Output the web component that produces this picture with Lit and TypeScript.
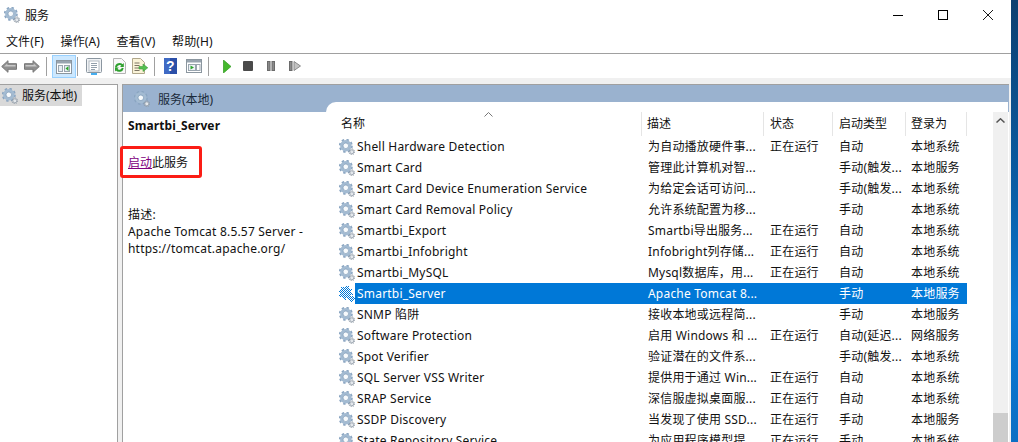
import { LitElement, html, css, svg } from "lit";
import { customElement } from "lit/decorators.js";

const gearShape = svg`<circle cx="6.800" cy="6.800" r="6" fill="none" stroke="#8aa5c1" stroke-width="2" stroke-dasharray="2.400 2.300"/>
  <circle cx="6.800" cy="6.800" r="4.300" fill="none" stroke="#a3bbd2" stroke-width="2.800"/>
  <circle cx="6.800" cy="6.800" r="2.800" fill="#f7fafc" stroke="#7795b3" stroke-width=".7"/>
  <circle cx="12.800" cy="12.800" r="2.900" fill="none" stroke="#8f9aa5" stroke-width="1" stroke-dasharray="1.200 1"/>
  <circle cx="12.800" cy="12.800" r="2" fill="#e4e8ec" stroke="#98a3ae" stroke-width=".9"/>`;

const gearSel = svg`<g shape-rendering="crispEdges">
    <circle cx="6.800" cy="6.800" r="6" fill="none" stroke="#0078d7" stroke-width="2" stroke-dasharray="2.400 2.300"/>
    <circle cx="6.800" cy="6.800" r="5.600" fill="#0078d7"/>
    <circle cx="12.800" cy="12.800" r="3" fill="#0078d7"/>
    <g fill="#fff">
      ${Array.from({ length: 64 }, (_, i) => {
        const x = (i % 8) * 2, y = Math.floor(i / 8) * 2;
        return svg`<rect x=${x} y=${y} width="1" height="1"/><rect x=${x + 1} y=${y + 1} width="1" height="1"/>`;
      })}
    </g>
  </g>`;

const gear = (sel = false) => html`<svg class="gear" width="16" height="16" viewBox="0 0 16 16">
  ${sel ? gearSel : gearShape}
</svg>`;

const arrow = (dir: number) => html`<svg width="16" height="13" viewBox="0 0 16 13">
  <path transform=${dir < 0 ? "" : "translate(16 0) scale(-1 1)"} d="M.7 6.500 7 .7V3.700H15.500V9.300H7V12.300Z" fill="#8f8f8f" stroke="#777"/>
  <path transform=${dir < 0 ? "" : "translate(16 0) scale(-1 1)"} d="M3 6.500 6.300 3.600V5H14.500V6.500Z" fill="#c8c8c8"/>
</svg>`;

const win = (inner: unknown) => html`<svg width="16" height="16" viewBox="0 0 16 16">
  <rect x=".5" y="1.500" width="15" height="13" fill="#fff" stroke="#8b969f"/>
  <rect x="1" y="2" width="14" height="2.500" fill="#98a4af"/>
  ${inner}
</svg>`;

const tree = win(svg`<rect x="2.500" y="6.500" width="4" height="6" fill="#e8eef3" stroke="#9aa5af"/>
  <rect x="8.500" y="6.500" width="5" height="6" fill="#e8eef3" stroke="#9aa5af"/><path d="M12.500 7v5L9.500 9.500Z" fill="#2da52d"/>`);
const props = html`<svg width="16" height="17" viewBox="0 0 16 17">
  <rect x=".5" y=".5" width="15" height="14" rx="1" fill="#f1f3f5" stroke="#8b96a0"/>
  <rect x="3" y="3" width="10" height="10" fill="#fff" stroke="#b4bcc4"/>
  <path d="M5 5.500h6M5 7.500h6M5 9.500h6M5 11.500h4" stroke="#93a0ac"/>
  <rect x="5" y="15" width="6" height="2" fill="#45aef0"/>
</svg>`;
const refresh = html`<svg width="16" height="16" viewBox="0 0 16 16">
  <path d="M2.500.5H10.500L14.500 4.500V15.500H2.500Z" fill="#f8f8f8" stroke="#b4b4b4"/>
  <path d="M5 9.500A3.600 3.600 0 0 1 11.500 7.500M11.800 10A3.600 3.600 0 0 1 5.500 11.500" fill="none" stroke="#2ea02e" stroke-width="2"/>
  <path d="M12.800 5V9H9ZM4 13.500V9.500H7.800Z" fill="#2ea02e"/>
</svg>`;
const exportIco = html`<svg width="16" height="16" viewBox="0 0 16 16">
  <path d="M.5.5H8.500L12.500 4.500V15.500H.5Z" fill="#faf3d8" stroke="#b0a78b"/>
  <path d="M2.500 5h5M2.500 7.500h5M2.500 10h5M2.500 12.500h5" stroke="#7d7565"/>
  <path d="M7 8.500H11V6L15.800 9.800 11 13.500V11H7Z" fill="#55bf4f" stroke="#3c9c3a" stroke-width=".6"/>
</svg>`;
const help = html`<svg width="13" height="16" viewBox="0 0 13 16">
  <rect width="13" height="16" fill="#2b4fa8"/><rect x="0" y="0" width="6" height="16" fill="#3f6ac4"/>
  <text x="6.500" y="13" text-anchor="middle" font-family="Liberation Sans" font-weight="700" font-size="14" fill="#fff">?</text>
</svg>`;
const winplay = win(svg`<rect x="2.500" y="6.500" width="7" height="6" fill="#eef3f6" stroke="#9aa5af"/>
  <rect x="10.500" y="6.500" width="3.500" height="6" fill="#fff" stroke="#9aa5af"/><path d="M4.500 7.500v4L8 9.500Z" fill="#2da52d"/>`);
const play = html`<svg width="8" height="13" viewBox="0 0 8 13"><path d="M.5 0 8 6.500.5 13Z" fill="#44b82c" stroke="#2c9a1d" stroke-width=".7"/></svg>`;
const stop = html`<svg width="10" height="10" viewBox="0 0 10 10"><rect width="10" height="10" rx="1" fill="#4a4a4a"/></svg>`;
const pause = html`<svg width="8" height="10" viewBox="0 0 8 10"><rect x=".5" y=".5" width="2.500" height="9" fill="#8a8a8a" stroke="#6b6b6b"/><rect x="5" y=".5" width="2.500" height="9" fill="#8a8a8a" stroke="#6b6b6b"/></svg>`;
const next = html`<svg width="12" height="10" viewBox="0 0 12 10"><rect x=".5" y=".5" width="2.500" height="9" fill="#8a8a8a" stroke="#6b6b6b"/><path d="M5 .5 11.500 5 5 9.500Z" fill="#c2c2c2" stroke="#8a8a8a"/></svg>`;

const SEP = Symbol("sep");
const TOOLS: [number, number, unknown][] = [
  [1, 16, arrow(-1)], [24, 16, arrow(1)], [46, 1, SEP],
  [86, 16, props], [111, 16, refresh], [132, 16, exportIco], [154, 1, SEP],
  [164, 13, help], [186, 16, winplay], [208, 1, SEP],
  [223, 8, play], [243, 10, stop], [267, 8, pause], [289, 12, next],
];

const RUN = "正在运行", AUTO = "自动", MAN = "手动", TRIG = "手动(触发...", SYS = "本地系统", LOC = "本地服务";
const ROWS: [string, string, string, string, string][] = [
  ["Shell Hardware Detection", "为自动播放硬件事...", RUN, AUTO, SYS],
  ["Smart Card", "管理此计算机对智...", "", TRIG, LOC],
  ["Smart Card Device Enumeration Service", "为给定会话可访问...", "", TRIG, SYS],
  ["Smart Card Removal Policy", "允许系统配置为移...", "", MAN, SYS],
  ["Smartbi_Export", "Smartbi导出服务...", RUN, AUTO, SYS],
  ["Smartbi_Infobright", "Infobright列存储...", RUN, AUTO, SYS],
  ["Smartbi_MySQL", "Mysql数据库，用...", RUN, AUTO, SYS],
  ["Smartbi_Server", "Apache Tomcat 8...", "", MAN, LOC],
  ["SNMP 陷阱", "接收本地或远程简...", "", MAN, LOC],
  ["Software Protection", "启用 Windows 和 ...", RUN, "自动(延迟...", "网络服务"],
  ["Spot Verifier", "验证潜在的文件系...", "", TRIG, SYS],
  ["SQL Server VSS Writer", "提供用于通过 Win...", RUN, AUTO, SYS],
  ["SRAP Service", "深信服虚拟桌面服...", RUN, AUTO, SYS],
  ["SSDP Discovery", "当发现了使用 SSD...", RUN, MAN, LOC],
  ["State Repository Service", "为应用程序模型提...", RUN, MAN, SYS],
];

@customElement("app-root")
export class AppRoot extends LitElement {
  static styles = css`
    :host { display: flex; width: 1018px; height: 442px; overflow: hidden; background: #fff;
      font: 12px/17px "Noto Sans", "Noto Sans CJK SC", sans-serif; letter-spacing: .2px; color: #111; position: relative; }
    svg { display: block; flex: none; }
    .win { width: 1011px; height: 442px; display: flex; flex-direction: column; }
    .strip { width: 7px; background: linear-gradient(#0c3f70, #0a5fa8 45%, #0a78d4 70%, #0b6fc4); }
    .title { height: 30px; display: flex; align-items: center; padding-left: 4px; gap: 5px; flex: none; }
    .title .caption { flex: 1; letter-spacing: 0; }
    .ctl { display: flex; margin-right: 18px; gap: 35px; align-items: center; }
    .menu { height: 23px; display: flex; gap: 16.500px; padding-left: 6px; align-items: center; flex: none; border-bottom: 1px solid #a0a0a0; }
    .menu span { letter-spacing: .12px; }
    .tools { height: 24px; display: flex; align-items: center; flex: none; position: relative; }
    .sep { width: 1px; height: 19px; background: #a0a0a0; }
    .hl { position: absolute; left: 52px; top: 1px; width: 22px; height: 21px; background: #cce8ff; border: 1px solid #99d1ff; display: flex; align-items: center; justify-content: center; }
    .sep2 { position: absolute; left: 77px; top: 3px; }
    .body { flex: 1; min-height: 0; display: flex; background: #f0f0f0; padding-top: 6px; }
    .tree { width: 117px; background: #fff; border-right: 1px solid #a0a0a0; border-top: 1px solid #a0a0a0; flex: none; }
    .node { width: 82px; height: 21px; background: #d9d9d9; display: flex; align-items: center; gap: 4px; padding-left: 2px; box-sizing: border-box; letter-spacing: 0; }
    .pane { margin-left: 4px; width: 886px; background: #fff; border-left: 1px solid #a0a0a0; border-top: 1px solid #a0a0a0; display: flex; flex-direction: column; min-height: 0; }
    .phead { height: 27px; flex: none; background: #9ab2cf; display: flex; align-items: center; gap: 8px; padding: 1px 0 0 11px; box-sizing: border-box; letter-spacing: 0; color: #1a2a3a; }
    .split { flex: 1; display: flex; min-height: 0; }
    .info { width: 203px; flex: none; padding: 5px 0 0 5px; box-sizing: border-box; }
    .info .name { font-weight: 700; letter-spacing: 0.1px; margin-bottom: 20px; }
    .info .act { margin-bottom: 35px; letter-spacing: 0; }
    .info a { color: #800080; text-decoration: underline; }
    .list { margin-top: -10px; width: 682px; flex: none; background: #fff; border-top-left-radius: 10px; display: flex; overflow: hidden; z-index: 1; }
    .table { width: 667px; flex: none; }
    .hdr { display: grid; grid-template-columns: 316px 122px 69px 73px 61px; height: 34px; padding-top: 10px; box-sizing: border-box; position: relative; }
    .hdr div { border-right: 1px solid #e5e5e5; display: flex; align-items: center; padding-bottom: 2px; box-sizing: border-box; letter-spacing: 0; }
    .h0 { padding-left: 15px; } .h1 { padding-left: 5px; } .h2 { padding-left: 6px; } .h3 { padding-left: 6px; } .h4 { padding-left: 5px; }
    .hdr svg { position: absolute; left: 158px; top: 10px; }
    .row { display: flex; height: 21px; padding-left: 13px; align-items: center; }
    .cells { display: grid; grid-template-columns: 286px 122px 69px 73px 62px; height: 21px; align-items: center; white-space: nowrap; }
    .cells span { padding-left: 7px; overflow: hidden; }
    .cells span:first-child { padding-left: 2px; }
    .cells span:last-child { padding-left: 6px; }
    .sel .cells { background: #0078d7; color: #fff; }
    .bar { width: 15px; background: #f0f0f0; flex: none; display: flex; flex-direction: column; margin-top: 10px; }
    .bar svg { margin: 6px auto 0; }
    .bar .gapfill { flex: 1; }
    .bar .thumb { height: 29px; background: #cdcdcd; }
    .mark { position: absolute; left: 120px; top: 146px; width: 82px; height: 32px; box-sizing: border-box; border: 3px solid #fb1d15; border-radius: 3px; }
  `;

  render() {
    let prev = 0;
    return html`
      <div class="win">
        <div class="title">
          ${gear()}<span class="caption">服务</span>
          <div class="ctl">
            <svg width="10" height="10" viewBox="0 0 10 10"><path d="M0 5.500H10" stroke="#000"/></svg>
            <svg width="10" height="10" viewBox="0 0 10 10"><rect x=".5" y=".5" width="9" height="9" fill="none" stroke="#000"/></svg>
            <svg width="10" height="10" viewBox="0 0 10 10"><path d="M0 0 10 10M10 0 0 10" stroke="#000" stroke-width=".9"/></svg>
          </div>
        </div>
        <div class="menu"><span>文件(F)</span><span>操作(A)</span><span>查看(V)</span><span>帮助(H)</span></div>
        <div class="tools">
          ${TOOLS.map(([x, w, ico]) => {
            const m = x - prev; prev = x + w;
            return html`<div style="margin-left:${m}px">${ico === SEP ? html`<div class="sep"></div>` : ico}</div>`;
          })}
          <div class="hl">${tree}</div>
          <div class="sep sep2"></div>
        </div>
        <div class="body">
          <div class="tree"><div class="node">${gear()}<span>服务(本地)</span></div></div>
          <div class="pane">
            <div class="phead">${gear()}<span>服务(本地)</span></div>
            <div class="split">
              <div class="info">
                <div class="name">Smartbi_Server</div>
                <div class="act"><a>启动</a>此服务</div>
                <div>描述:</div>
                <div>Apache Tomcat 8.5.57 Server -</div>
                <div>https://tomcat.apache.org/</div>
              </div>
              <div class="list">
                <div class="table">
                  <div class="hdr">
                    <div class="h0">名称</div><div class="h1">描述</div><div class="h2">状态</div><div class="h3">启动类型</div><div class="h4">登录为</div>
                    <svg width="9" height="5" viewBox="0 0 9 5"><path d="M.5 4.500 4.500.5 8.500 4.500" fill="none" stroke="#777"/></svg>
                  </div>
                  ${ROWS.map((r, i) => html`<div class="row ${i === 7 ? "sel" : ""}">
                    ${gear(i === 7)}
                    <div class="cells">${r.map((c) => html`<span>${c}</span>`)}</div>
                  </div>`)}
                </div>
                <div class="bar">
                  <svg width="9" height="5" viewBox="0 0 9 5"><path d="M.5 4.500 4.500.8 8.500 4.500" fill="none" stroke="#555" stroke-width="1.500"/></svg>
                  <div class="gapfill"></div>
                  <div class="thumb"></div>
                </div>
              </div>
            </div>
          </div>
        </div>
      </div>
      <div class="strip"></div>
      <div class="mark"></div>
    `;
  }
}
